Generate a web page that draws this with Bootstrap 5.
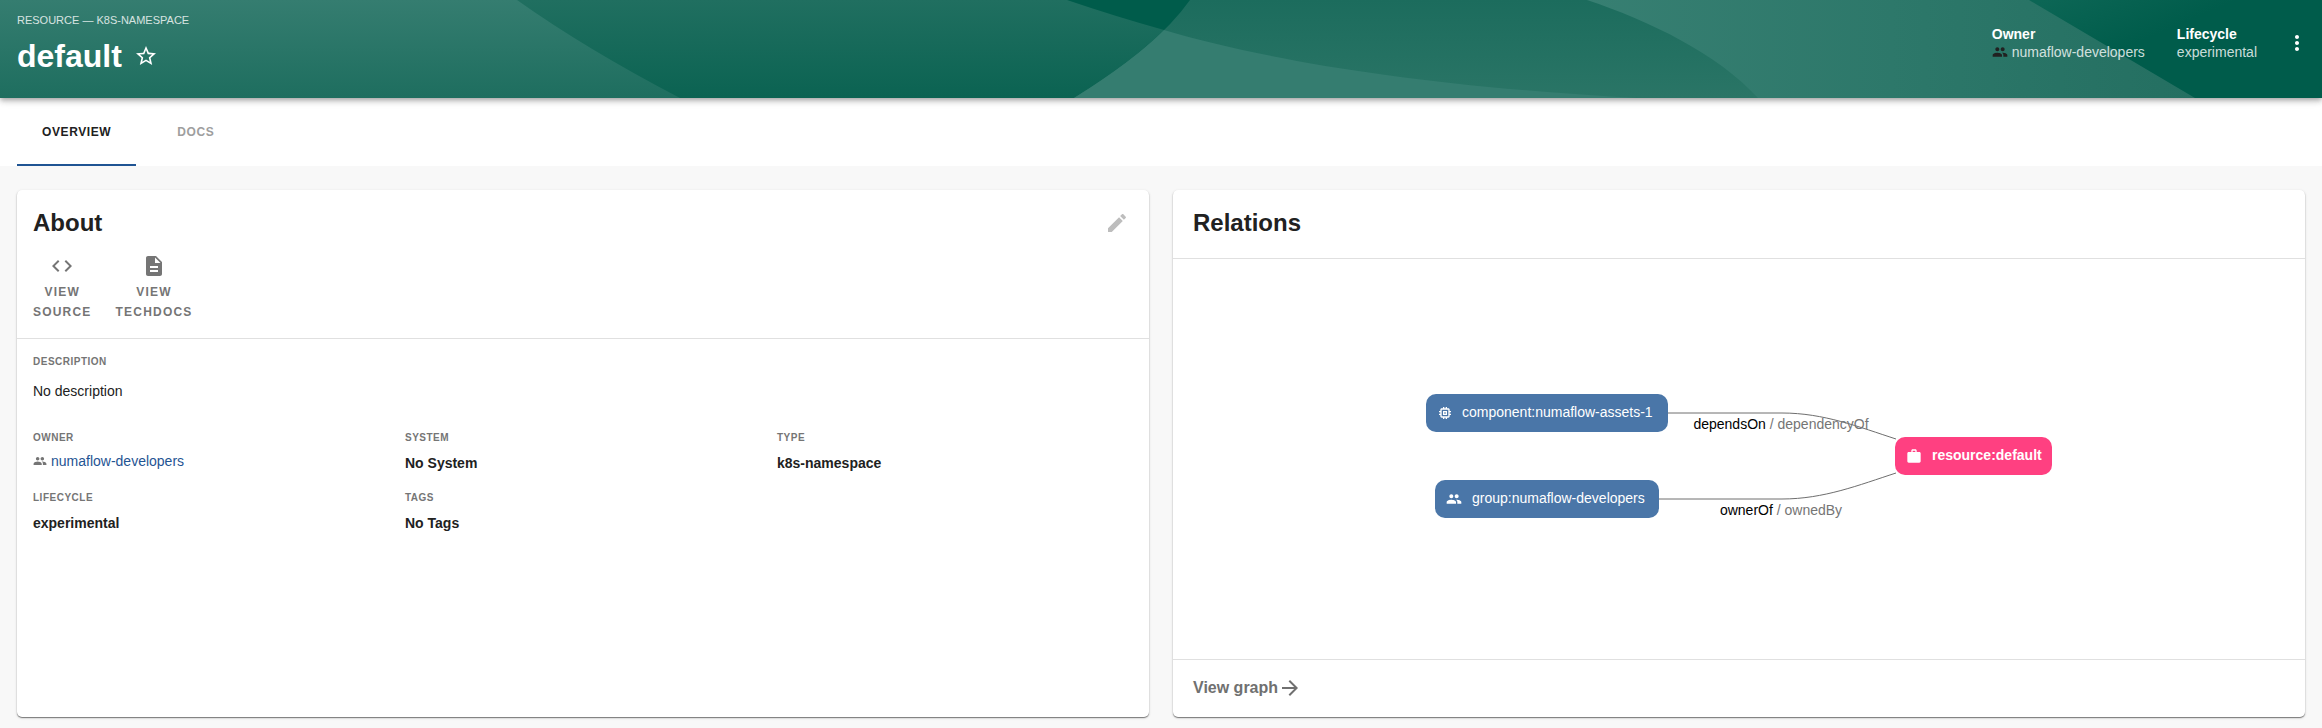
<!DOCTYPE html>
<html lang="en">
<head>
<meta charset="utf-8">
<meta name="viewport" content="width=device-width, initial-scale=1">
<title>default</title>
<link href="https://cdn.jsdelivr.net/npm/bootstrap@5.3.0/dist/css/bootstrap.min.css" rel="stylesheet">
<style>
body { font-family: "Liberation Sans", Arial, sans-serif; font-size: 14px; line-height: 20px; color: #212121; background: #f8f8f8; }
a { text-decoration: none; }
svg { display: block; fill: currentColor; }
svg svg { fill: inherit; }
.page-head { background: #005c4b; padding: 12px 13px 22px 17px; z-index: 1; color: #fff;
  box-shadow: 0 2px 4px -1px rgba(0,0,0,.2), 0 4px 5px rgba(0,0,0,.14), 0 1px 10px rgba(0,0,0,.12); }
.page-head .wave { inset: 0; }
.crumb { font-size: 11px; line-height: 16px; opacity: .8; }
.page-title { font-size: 32px; line-height: 40px; font-weight: 700; }
.meta { line-height: 18px; padding-top: 13px; }
.meta-value { color: rgba(255,255,255,.8); }
.meta-icon { color: #212121; }
.plain-btn { border: 0; background: none; padding: 0; color: inherit; }
.more-btn { padding-top: 19px; }
.tabs { background: #fff; padding: 0 17px; }
.tab-btn { border: 0; border-bottom: 2px solid transparent; background: none; padding: 24px 25px 22px; font-size: 12px; line-height: 20px; font-weight: 700; letter-spacing: .05em; color: #9e9e9e; }
.tab-btn.active { color: #212121; border-color: #1f5493; }
.content { padding: 24px 17px 11px; gap: 24px; }
.panel { flex: 1 1 0; min-width: 0; background: #fff; border-radius: 5px; box-shadow: 0 1px 1px rgba(0,0,0,.45), 0 1px 3px rgba(0,0,0,.16); }
.panel-title { font-size: 24px; line-height: 32px; font-weight: 700; }
.rule-b { border-bottom: 1px solid #e0e0e0; }
.rule-t { border-top: 1px solid #e0e0e0; }
.about-head { padding: 17px 20px 16px 16px; }
.quick-links { gap: 24px; margin-top: 15px; }
.quick { font-size: 12px; font-weight: 700; letter-spacing: .1em; color: #757575; gap: 4px; }
.edit { color: #bdbdbd; }
.about-body { padding: 15px 0 16px 16px; }
.fields { --bs-gutter-x: 0; --bs-gutter-y: 17px; }
.field-label { font-size: 10px; line-height: 16px; font-weight: 700; letter-spacing: .05em; color: #757575; }
.field-value { margin: 7px 0 0; font-weight: 700; }
.field-link { margin: 5px 0 0; gap: 4px; color: #757575; }
.field-link a { color: #1f5493; }
.description { margin: 11px 0 29px; }
.rel-head { padding: 17px 20px 19px; }
.rel-foot { padding: 16px 20px 17px; }
.rel-foot a { font-size: 16px; line-height: 24px; font-weight: 700; color: #707070; }
.graph { max-width: 100%; height: auto; font-size: 14px; }
</style>
</head>
<body class="d-flex flex-column min-vh-100">
<svg width="0" height="0" class="position-absolute" aria-hidden="true">
  <symbol id="people" viewBox="0 0 24 24"><path d="M16 11c1.660 0 2.990-1.340 2.990-3S17.660 5 16 5s-3 1.340-3 3 1.340 3 3 3zm-8 0c1.660 0 2.990-1.340 2.990-3S9.660 5 8 5 5 6.340 5 8s1.340 3 3 3zm0 2c-2.330 0-7 1.170-7 3.500V19h14v-2.500C15 14.170 10.330 13 8 13zm8 0c-.29 0-.62.020-.970.050 1.160.840 1.970 1.970 1.970 3.450V19h6v-2.500c0-2.330-4.670-3.500-7-3.500z"/></symbol>
</svg>

<header class="page-head position-relative d-flex align-items-start">
  <svg class="wave position-absolute w-100 h-100" viewBox="0 0 2322 98" preserveAspectRatio="none" aria-hidden="true">
    <defs>
      <linearGradient id="g1" x1="0" y1="0" x2="0" y2="1"><stop offset="0" stop-color="#357d70"/><stop offset="1" stop-color="#1e6e5f"/></linearGradient>
      <linearGradient id="g2" x1="0" y1="0" x2="0" y2="1"><stop offset="0" stop-color="#206f60"/><stop offset="1" stop-color="#0b6352"/></linearGradient>
      <linearGradient id="g3" x1="0" y1="0" x2="0" y2="1"><stop offset="0" stop-color="#1c6c5d"/><stop offset="1" stop-color="#2a7566"/></linearGradient>
      <linearGradient id="g4" x1="0" y1="0" x2="1" y2="0"><stop offset="0" stop-color="#377f72"/><stop offset=".5" stop-color="#2d786a"/><stop offset="1" stop-color="#246f61"/></linearGradient>
      <linearGradient id="g5" gradientUnits="userSpaceOnUse" x1="2090" y1="-20" x2="2120" y2="50"><stop offset="0" stop-color="#0c6655"/><stop offset="1" stop-color="#005c4b"/></linearGradient>
    </defs>
    <path fill="url(#g2)" d="M510 0H1067Q1114 16 1164 30Q1129 64 1074 98H670Z"/>
    <path fill="url(#g1)" d="M0 0H517Q586 49 680 98H0Z"/>
    <path fill="url(#g3)" d="M1190 0H1780V98H1074Q1156 48 1190 0Z"/>
    <path fill="#357d70" d="M1164 30C1270 61 1420 86 1637 98H1074Q1133 61 1164 30Z"/>
    <path fill="url(#g5)" d="M2020 0H2322V98H2180Z"/>
    <path fill="url(#g4)" d="M1587 0C1650 21 1718 54 1758 98H2195L2029 0Z"/>
  </svg>
  <div class="position-relative flex-grow-1">
    <div class="crumb">RESOURCE — K8S-NAMESPACE</div>
    <div class="d-flex align-items-center mt-2">
      <h1 class="page-title m-0">default</h1>
      <button class="plain-btn ms-2 ps-1" type="button" aria-label="Add to favorites"><svg width="24" height="24" viewBox="0 0 24 24"><path d="M22 9.240l-7.190-.62L12 2 9.190 8.630 2 9.240l5.460 4.730L5.820 21 12 17.270 18.180 21l-1.630-7.030L22 9.240zM12 15.400l-3.760 2.270 1-4.280-3.320-2.880 4.380-.38L12 6.100l1.710 4.040 4.380.38-3.320 2.880 1 4.280L12 15.400z"/></svg></button>
    </div>
  </div>
  <div class="position-relative d-flex">
    <div class="meta me-4 pe-2">
      <div class="fw-bold">Owner</div>
      <div class="d-flex align-items-center gap-1"><svg class="meta-icon" width="16" height="16"><use href="#people"/></svg><a class="meta-value" href="#">numaflow-developers</a></div>
    </div>
    <div class="meta">
      <div class="fw-bold">Lifecycle</div>
      <div class="meta-value">experimental</div>
    </div>
    <button class="plain-btn more-btn align-self-start ms-4 ps-1" type="button" aria-label="More"><svg width="24" height="24" viewBox="0 0 24 24"><path d="M12 8c1.100 0 2-.9 2-2s-.9-2-2-2-2 .9-2 2 .9 2 2 2zm0 2c-1.100 0-2 .9-2 2s.9 2 2 2 2-.9 2-2-.9-2-2-2zm0 6c-1.100 0-2 .9-2 2s.9 2 2 2 2-.9 2-2-.9-2-2-2z"/></svg></button>
  </div>
</header>

<nav class="tabs d-flex gap-3">
  <button class="tab-btn active" type="button">OVERVIEW</button>
  <button class="tab-btn" type="button">DOCS</button>
</nav>

<main class="content d-flex flex-grow-1">
  <section class="panel">
    <div class="about-head rule-b">
      <div class="d-flex justify-content-between align-items-center">
        <h2 class="panel-title m-0">About</h2>
        <button class="plain-btn edit" type="button" aria-label="Edit"><svg width="24" height="24" viewBox="0 0 24 24"><path d="M3 17.250V21h3.750L17.810 9.940l-3.750-3.750L3 17.250zM20.710 7.040c.39-.39.39-1.020 0-1.410l-2.340-2.340c-.39-.39-1.020-.39-1.410 0l-1.830 1.830 3.750 3.750 1.830-1.830z"/></svg></button>
      </div>
      <div class="quick-links d-flex">
        <a class="quick d-flex flex-column align-items-center text-center" href="#"><svg width="24" height="24" viewBox="0 0 24 24"><path d="M9.400 16.600L4.800 12l4.600-4.600L8 6l-6 6 6 6 1.400-1.400zm5.200 0l4.600-4.600-4.600-4.600L16 6l6 6-6 6-1.400-1.400z"/></svg><span>VIEW<br>SOURCE</span></a>
        <a class="quick d-flex flex-column align-items-center text-center" href="#"><svg width="24" height="24" viewBox="0 0 24 24"><path d="M14 2H6c-1.100 0-1.990.9-1.990 2L4 20c0 1.100.89 2 1.990 2H18c1.100 0 2-.9 2-2V8l-6-6zm2 16H8v-2h8v2zm0-4H8v-2h8v2zm-3-5V3.500L18.500 9H13z"/></svg><span>VIEW<br>TECHDOCS</span></a>
      </div>
    </div>
    <div class="about-body">
      <div class="field-label">DESCRIPTION</div>
      <p class="description">No description</p>
      <div class="fields row row-cols-3">
        <div><div class="field-label">OWNER</div><div class="field-link d-flex align-items-center"><svg width="14" height="14"><use href="#people"/></svg><a href="#">numaflow-developers</a></div></div>
        <div><div class="field-label">SYSTEM</div><p class="field-value">No System</p></div>
        <div><div class="field-label">TYPE</div><p class="field-value">k8s-namespace</p></div>
        <div><div class="field-label">LIFECYCLE</div><p class="field-value">experimental</p></div>
        <div><div class="field-label">TAGS</div><p class="field-value">No Tags</p></div>
      </div>
    </div>
  </section>

  <section class="panel d-flex flex-column">
    <div class="rel-head rule-b"><h2 class="panel-title m-0">Relations</h2></div>
    <div class="flex-grow-1 d-flex align-items-center justify-content-center">
      <svg class="graph" width="640" height="136" viewBox="0 0 640 136">
        <g fill="none" stroke="#6e6e6e" stroke-width="1">
          <path d="M249 22H363C405 22 440 36 477 48"/>
          <path d="M240 108H363C405 108 440 94 477 82"/>
        </g>
        <rect x="7" y="3" width="242" height="38" rx="10" fill="#4a76a8"/>
        <rect x="16" y="89" width="224" height="38" rx="10" fill="#4a76a8"/>
        <rect x="476" y="46" width="157" height="38" rx="10" fill="#ff4081"/>
        <g fill="#fff">
          <svg x="18" y="14" width="16" height="16" viewBox="0 0 24 24"><path d="M15 9H9v6h6V9zm-2 4h-2v-2h2v2zm8-2V9h-2V7c0-1.100-.9-2-2-2h-2V3h-2v2h-2V3H9v2H7c-1.100 0-2 .9-2 2v2H3v2h2v2H3v2h2v2c0 1.100.9 2 2 2h2v2h2v-2h2v2h2v-2h2c1.100 0 2-.9 2-2v-2h2v-2h-2v-2h2zm-4 6H7V7h10v10z"/></svg>
          <use href="#people" x="27" y="100" width="16" height="16"/>
          <svg x="487" y="57" width="16" height="16" viewBox="0 0 24 24"><path d="M20 6h-4V4c0-1.100-.9-2-2-2h-4c-1.100 0-2 .9-2 2v2H4c-1.100 0-2 .9-2 2v12c0 1.100.9 2 2 2h16c1.100 0 2-.9 2-2V8c0-1.100-.9-2-2-2zm-6 0h-4V4h4v2z"/></svg>
          <text x="43" y="26">component:numaflow-assets-1</text>
          <text x="53" y="112">group:numaflow-developers</text>
          <text x="513" y="69" font-weight="700">resource:default</text>
        </g>
        <text x="362" y="38" text-anchor="middle" fill="#000">dependsOn <tspan fill="#757575">/ dependencyOf</tspan></text>
        <text x="362" y="124" text-anchor="middle" fill="#000">ownerOf <tspan fill="#757575">/ ownedBy</tspan></text>
      </svg>
    </div>
    <div class="rel-foot rule-t"><a class="d-inline-flex align-items-center" href="#">View graph<svg width="24" height="24" viewBox="0 0 24 24"><path d="M12 4l-1.410 1.410L16.170 11H4v2h12.170l-5.580 5.590L12 20l8-8z"/></svg></a></div>
  </section>
</main>
<script src="https://cdn.jsdelivr.net/npm/bootstrap@5.3.0/dist/js/bootstrap.bundle.min.js"></script>
</body>
</html>
